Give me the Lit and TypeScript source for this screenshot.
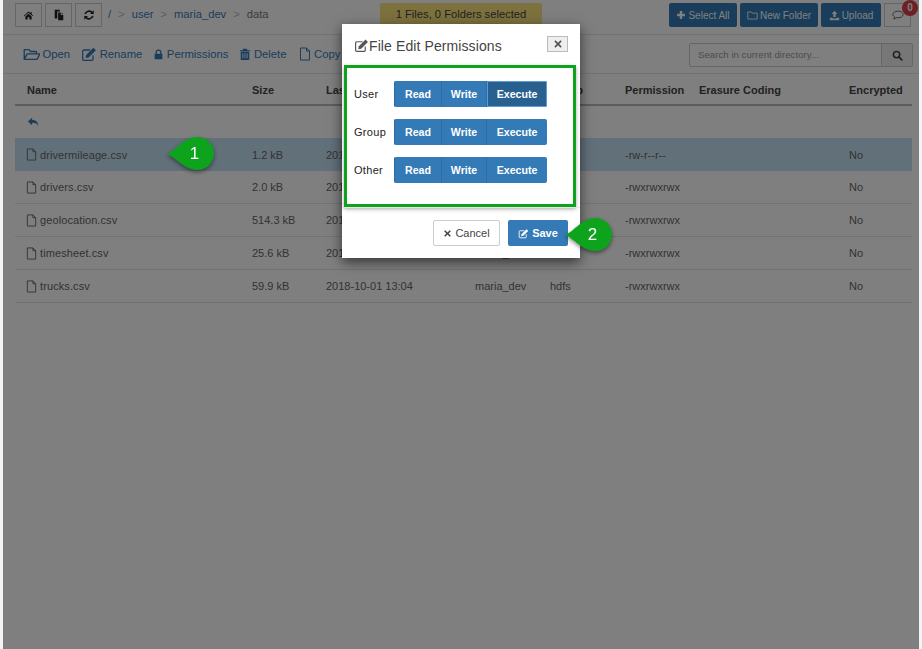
import { css, html, LitElement, svg } from "lit";
import { customElement } from "lit/decorators.js";

const icons: Record<string, unknown> = {
    home: svg`<path fill="currentColor" d="M7 2 1 7.200l.7.8L7 3.500 12.300 8l.7-.8-2-1.700V2.500H9.500v1.700z"/><path fill="currentColor" d="M3 8.200 7 4.800l4 3.400V12H8.200V9.200H5.800V12H3z"/>`,
    files: svg`<path fill="currentColor" d="M2 1h6v2H5v8H2z"/><path fill="currentColor" d="M6 4h3v3h3v6H6z"/><path fill="currentColor" d="M10 4l2 2h-2z"/>`,
    refresh: svg`<path fill="none" stroke="currentColor" stroke-width="1.900" d="M2.500 6A4.700 4.700 0 0 1 10.800 4.300M11.500 8A4.700 4.700 0 0 1 3.200 9.700"/><path fill="currentColor" d="M12.500 1.500v4.300H8.200zM1.500 12.500V8.200h4.300z"/>`,
    open: svg`<path fill="none" stroke="currentColor" stroke-width="1.100" stroke-linejoin="round" d="M1 11V3h4l1 1.500h5V6.500M1 11l2.500-4.500H14L11.500 11z"/>`,
    edit: svg`<path fill="none" stroke="currentColor" stroke-width="1.100" d="M10.500 8v3.500a1 1 0 0 1-1 1h-7a1 1 0 0 1-1-1v-7a1 1 0 0 1 1-1H8"/><path fill="currentColor" d="M4.500 7.800 10.800 1.500l2.200 2.200-6.300 6.300-2.700.5z"/>`,
    lock: svg`<path fill="none" stroke="currentColor" stroke-width="1.600" d="M4 6.500V4.500a3 3 0 0 1 6 0v2"/><rect x="2" y="6.200" width="10" height="7" rx="1" fill="currentColor"/>`,
    trash: svg`<path fill="currentColor" d="M5 1h4l.8 1.500H13v1.200H1V2.500h3.200zM2 4.500h10V13a1 1 0 0 1-1 1H3a1 1 0 0 1-1-1zM4 6v6h1V6zm2.500 0v6h1V6zM9 6v6h1V6z"/>`,
    file: svg`<path fill="none" stroke="currentColor" stroke-width="1" stroke-linejoin="round" d="M2.500 1h6l3 3v9h-9zM8.500 1v3h3"/>`,
    plus: svg`<path fill="currentColor" d="M5.300 1.500h3.400v3.800h3.800v3.400H8.700v3.800H5.300V8.700H1.500V5.300h3.800z"/>`,
    folder: svg`<path fill="none" stroke="currentColor" stroke-width="1.100" stroke-linejoin="round" d="M1 11.500V2.500h4.500l1 1.500H13v7.500z"/>`,
    upload: svg`<path fill="currentColor" d="M7 1l3.700 4H8.500v4h-3V5H3.300zM1 10h3.500v.8h5V10H13v3H1z"/>`,
    comment: svg`<path fill="none" stroke="currentColor" stroke-width="1" d="M7 2.500c3.300 0 6 1.700 6 3.900S10.300 10.300 7 10.300c-.7 0-1.300 0-1.900-.2-.8.800-2 1.400-3.100 1.500.7-.8 1-1.500 1-2.300C1.900 8.600 1 7.600 1 6.400 1 4.200 3.700 2.500 7 2.500z"/>`,
    search: svg`<circle cx="5.800" cy="5.800" r="4" fill="none" stroke="currentColor" stroke-width="2"/><path stroke="currentColor" stroke-width="2.300" stroke-linecap="round" d="m9 9 3.500 3.500"/>`,
    reply: svg`<path fill="currentColor" d="M6 2v2.700c4 0 7 1.700 7 7.300-1-3-3-4-7-4v2.700L1 6.300z"/>`,
    remove: svg`<path fill="currentColor" d="M3.500 1.800 7 5.300l3.500-3.500 1.700 1.700L8.700 7l3.500 3.500-1.700 1.700L7 8.700l-3.500 3.500-1.700-1.700L5.300 7 1.800 3.500z"/>`,
};

const icon = (name: string, size = 12) => html`
    <svg class="icon" width="${size}" height="${size}" viewBox="0 0 14 14">${icons[name]}</svg>
`;

const files = [
    ["drivermileage.csv", "1.2 kB", "2018-10-01 13:03", "maria_dev", "hdfs", "-rw-r--r--"],
    ["drivers.csv", "2.0 kB", "2018-10-01 13:03", "maria_dev", "hdfs", "-rwxrwxrwx"],
    ["geolocation.csv", "514.3 kB", "2018-10-01 13:03", "maria_dev", "hdfs", "-rwxrwxrwx"],
    ["timesheet.csv", "25.6 kB", "2018-10-01 13:04", "maria_dev", "hdfs", "-rwxrwxrwx"],
    ["trucks.csv", "59.9 kB", "2018-10-01 13:04", "maria_dev", "hdfs", "-rwxrwxrwx"],
];

@customElement("app-root")
export class AppRoot extends LitElement {
    static override styles = css`
        :host {
            display: block;
            position: relative;
            width: 922px;
            height: 649px;
            overflow: hidden;
            background: #f4f4f4;
            font-family: "Liberation Sans", Arial, sans-serif;
            font-size: 11px;
            color: #333;
        }

        .icon {
            flex: none;
            display: block;
        }

        .page {
            display: flex;
            flex-direction: column;
            margin: 0 3px;
            height: 649px;
            background: #fff;
        }

        .top {
            display: flex;
            align-items: flex-start;
            box-sizing: border-box;
            height: 35px;
            padding: 3px 8px 0 12px;
            border-bottom: 1px solid #e4e4e4;
        }

        .tool {
            display: flex;
            align-items: center;
            justify-content: center;
            box-sizing: border-box;
            width: 27px;
            height: 24px;
            margin-right: 3px;
            border: 1px solid #ccc;
            color: #222;
        }

        .crumbs {
            display: flex;
            width: 272px;
            gap: 7px;
            padding: 5px 0 0 3px;
            font-size: 11.200px;
            color: #337ab7;
        }

        .crumbs .sep {
            color: #bbb;
        }

        .crumbs .last {
            color: #777;
        }

        .selected {
            box-sizing: border-box;
            width: 162px;
            height: 21px;
            padding-top: 5px;
            text-align: center;
            background: #fbe37c;
            border-radius: 2px;
            font-size: 11.200px;
            color: #444;
        }

        .actions {
            display: flex;
            gap: 3px;
            margin-left: auto;
            position: relative;
        }

        .action {
            display: flex;
            align-items: center;
            justify-content: center;
            gap: 2px;
            box-sizing: border-box;
            height: 24px;
            background: #337ab7;
            border-radius: 2px;
            font-size: 10px;
            color: #fff;
        }

        .chat {
            display: flex;
            align-items: center;
            justify-content: center;
            box-sizing: border-box;
            width: 27px;
            height: 24px;
            border: 1px solid #ccc;
            color: #555;
        }

        .count {
            position: absolute;
            top: -3px;
            right: -7px;
            width: 16px;
            height: 16px;
            line-height: 16px;
            border-radius: 50%;
            text-align: center;
            background: #d9434a;
            font-size: 10px;
            font-weight: 700;
            color: #fff;
        }

        .bar {
            display: flex;
            align-items: center;
            box-sizing: border-box;
            height: 39px;
            padding: 2px 6px 0 20px;
            border-bottom: 1px solid #e4e4e4;
        }

        .links {
            display: flex;
            gap: 11px;
            margin-top: -2px;
            color: #337ab7;
            font-size: 11.300px;
        }

        .links span {
            display: flex;
            align-items: center;
            gap: 2.500px;
        }

        .search {
            display: flex;
            box-sizing: border-box;
            width: 224px;
            height: 24px;
            margin-left: auto;
            border: 1px solid #ccc;
            border-radius: 2px;
        }

        .search .input {
            flex: 1;
            padding: 5px 0 0 8px;
            font-size: 9.700px;
            color: #999;
        }

        .search .go {
            display: flex;
            align-items: center;
            justify-content: center;
            width: 30px;
            border-left: 1px solid #ccc;
            background: #eee;
            color: #444;
        }

        .table {
            margin: 0 7px 0 12px;
        }

        .row {
            display: grid;
            grid-template-columns: 225px 74px 149px 75px 75px 74px 150px 1fr;
            align-items: center;
            box-sizing: border-box;
            height: 33px;
            padding-left: 12px;
            border-bottom: 1px solid #e4e4e4;
            color: #666;
        }

        .row.head {
            height: 32px;
            padding-top: 2px;
            border-bottom: 2px solid #bbb;
            font-weight: 700;
            color: #444;
        }

        .row.back {
            height: 32px;
            color: #337ab7;
            border-bottom: 0;
        }

        .row.active {
            background: #c5e1f5;
            border-bottom: 0;
        }

        .name {
            display: flex;
            align-items: center;
            gap: 2px;
            letter-spacing: 0.1px;
        }

        .name .icon {
            margin-left: -2px;
        }

        .shade {
            position: absolute;
            inset: 0 3px;
            background: rgba(0, 0, 0, 0.5);
        }

        .modal {
            position: absolute;
            left: 342px;
            top: 24px;
            box-sizing: border-box;
            width: 238px;
            height: 234px;
            background: #fff;
            box-shadow: 0 4px 12px rgba(0, 0, 0, 0.6);
        }

        .modal-head {
            display: flex;
            align-items: center;
            box-sizing: border-box;
            height: 41px;
            padding: 2px 12px 0 12px;
            font-size: 14px;
            letter-spacing: 0.1px;
            color: #444;
        }

        .modal-head .icon {
            color: #555;
        }

        .close {
            display: flex;
            align-items: center;
            justify-content: center;
            box-sizing: border-box;
            width: 21px;
            height: 16px;
            margin: -3px 0 0 auto;
            border: 1px solid #bbb;
            background: #eee;
            color: #222;
        }

        .perms {
            display: grid;
            gap: 12px;
            align-content: start;
            box-sizing: border-box;
            width: 232px;
            height: 142px;
            margin-left: 2px;
            padding: 13px 0 0 7px;
            border: 3px solid #0da31c;
            box-shadow: 0 2px 4px rgba(0, 0, 0, 0.35);
        }

        .perm {
            display: flex;
            align-items: center;
        }

        .perm label {
            width: 40px;
            padding-bottom: 1px;
            font-size: 11px;
            letter-spacing: 0.3px;
            color: #222;
        }

        .group {
            display: flex;
            height: 26px;
            border-radius: 2px;
            overflow: hidden;
        }

        .group span {
            display: flex;
            align-items: center;
            justify-content: center;
            box-sizing: border-box;
            padding-bottom: 1px;
            background: #337ab7;
            border-left: 1px solid #2e6da4;
            font-size: 10.600px;
            font-weight: 700;
            color: #fff;
        }

        .group span.on {
            background: #286090;
            box-shadow: inset 0 0 0 1px #5b9bd8;
        }

        .foot {
            display: flex;
            justify-content: flex-end;
            gap: 8px;
            padding: 12px 12px 0 0;
            border-top: 1px solid #e5e5e5;
        }

        .foot div {
            display: flex;
            align-items: center;
            justify-content: center;
            gap: 3px;
            box-sizing: border-box;
            height: 26px;
            border-radius: 2px;
            font-size: 11px;
        }

        .cancel {
            width: 67px;
            border: 1px solid #ccc;
            color: #444;
        }

        .save {
            width: 60px;
            background: #337ab7;
            font-weight: 700;
            color: #fff;
        }

        .callout {
            position: absolute;
            width: 47px;
            height: 33px;
            filter: drop-shadow(0 2px 2px rgba(0, 0, 0, 0.45));
        }

        .callout svg {
            display: block;
        }

        .callout span {
            position: absolute;
            left: 8px;
            right: 0;
            top: 7px;
            text-align: center;
            font-size: 17px;
            color: #fff;
        }
    `;

    private renderPerm(label: string, onIndex: number) {
        const cols = [
            ["Read", 47],
            ["Write", 45],
            ["Execute", 61],
        ] as const;
        return html`
            <div class="perm">
                <label>${label}</label>
                <div class="group">
                    ${cols.map(
                        ([text, w], i) => html`
                            <span class="${i === onIndex ? "on" : ""}" style="width:${w}px">${text}</span>
                        `,
                    )}
                </div>
            </div>
        `;
    }

    private renderCallout(n: number, left: number, top: number) {
        return html`
            <div class="callout" style="left:${left}px;top:${top}px">
                <svg width="47" height="33" viewBox="0 0 47 33">
                    <path
                        fill="#0da31c"
                        d="M0 17C10 13 17 0 30.500 0a16.500 16.500 0 0 1 0 33C17 33 10 21 0 17z"
                    />
                </svg>
                <span>${n}</span>
            </div>
        `;
    }

    override render() {
        return html`
            <div class="page">
                <div class="top">
                    <div class="tool">${icon("home", 11)}</div>
                    <div class="tool">${icon("files", 12)}</div>
                    <div class="tool">${icon("refresh", 12)}</div>
                    <div class="crumbs">
                        <span>/</span><span class="sep">&gt;</span><span>user</span><span class="sep">&gt;</span
                        ><span>maria_dev</span><span class="sep">&gt;</span><span class="last">data</span>
                    </div>
                    <div class="selected">1 Files, 0 Folders selected</div>
                    <div class="actions">
                        <div class="action" style="width:68px">${icon("plus", 10)}Select All</div>
                        <div class="action" style="width:78px">${icon("folder", 11)}New Folder</div>
                        <div class="action" style="width:60px">${icon("upload", 11)}Upload</div>
                        <div class="chat">${icon("comment", 12)}</div>
                        <div class="count">0</div>
                    </div>
                </div>
                <div class="bar">
                    <div class="links">
                        <span>${icon("open", 17)}Open</span>
                        <span>${icon("edit", 16)}Rename</span>
                        <span>${icon("lock", 11)}Permissions</span>
                        <span>${icon("trash", 12)}Delete</span>
                        <span>${icon("file", 14)}Copy</span>
                    </div>
                    <div class="search">
                        <div class="input">Search in current directory...</div>
                        <div class="go">${icon("search", 11)}</div>
                    </div>
                </div>
                <div class="table">
                    <div class="row head">
                        <span>Name</span><span>Size</span><span>Last Modified</span><span>Owner</span
                        ><span>Group</span><span>Permission</span><span>Erasure Coding</span><span>Encrypted</span>
                    </div>
                    <div class="row back">${icon("reply", 12)}</div>
                    ${files.map(
                        (f, i) => html`
                            <div class="row ${i === 0 ? "active" : ""}">
                                <span class="name">${icon("file", 13)}${f[0]}</span>
                                <span>${f[1]}</span><span>${f[2]}</span><span>${f[3]}</span><span>${f[4]}</span
                                ><span>${f[5]}</span><span></span><span>No</span>
                            </div>
                        `,
                    )}
                </div>
            </div>
            <div class="shade"></div>
            <div class="modal">
                <div class="modal-head">
                    ${icon("edit", 15)}File Edit Permissions
                    <div class="close">${icon("remove", 10)}</div>
                </div>
                <div class="perms">
                    ${this.renderPerm("User", 2)} ${this.renderPerm("Group", -1)} ${this.renderPerm("Other", -1)}
                </div>
                <div class="foot">
                    <div class="cancel">${icon("remove", 9)}Cancel</div>
                    <div class="save">${icon("edit", 11)}Save</div>
                </div>
            </div>
            ${this.renderCallout(1, 167, 137)} ${this.renderCallout(2, 565, 218)}
        `;
    }
}
